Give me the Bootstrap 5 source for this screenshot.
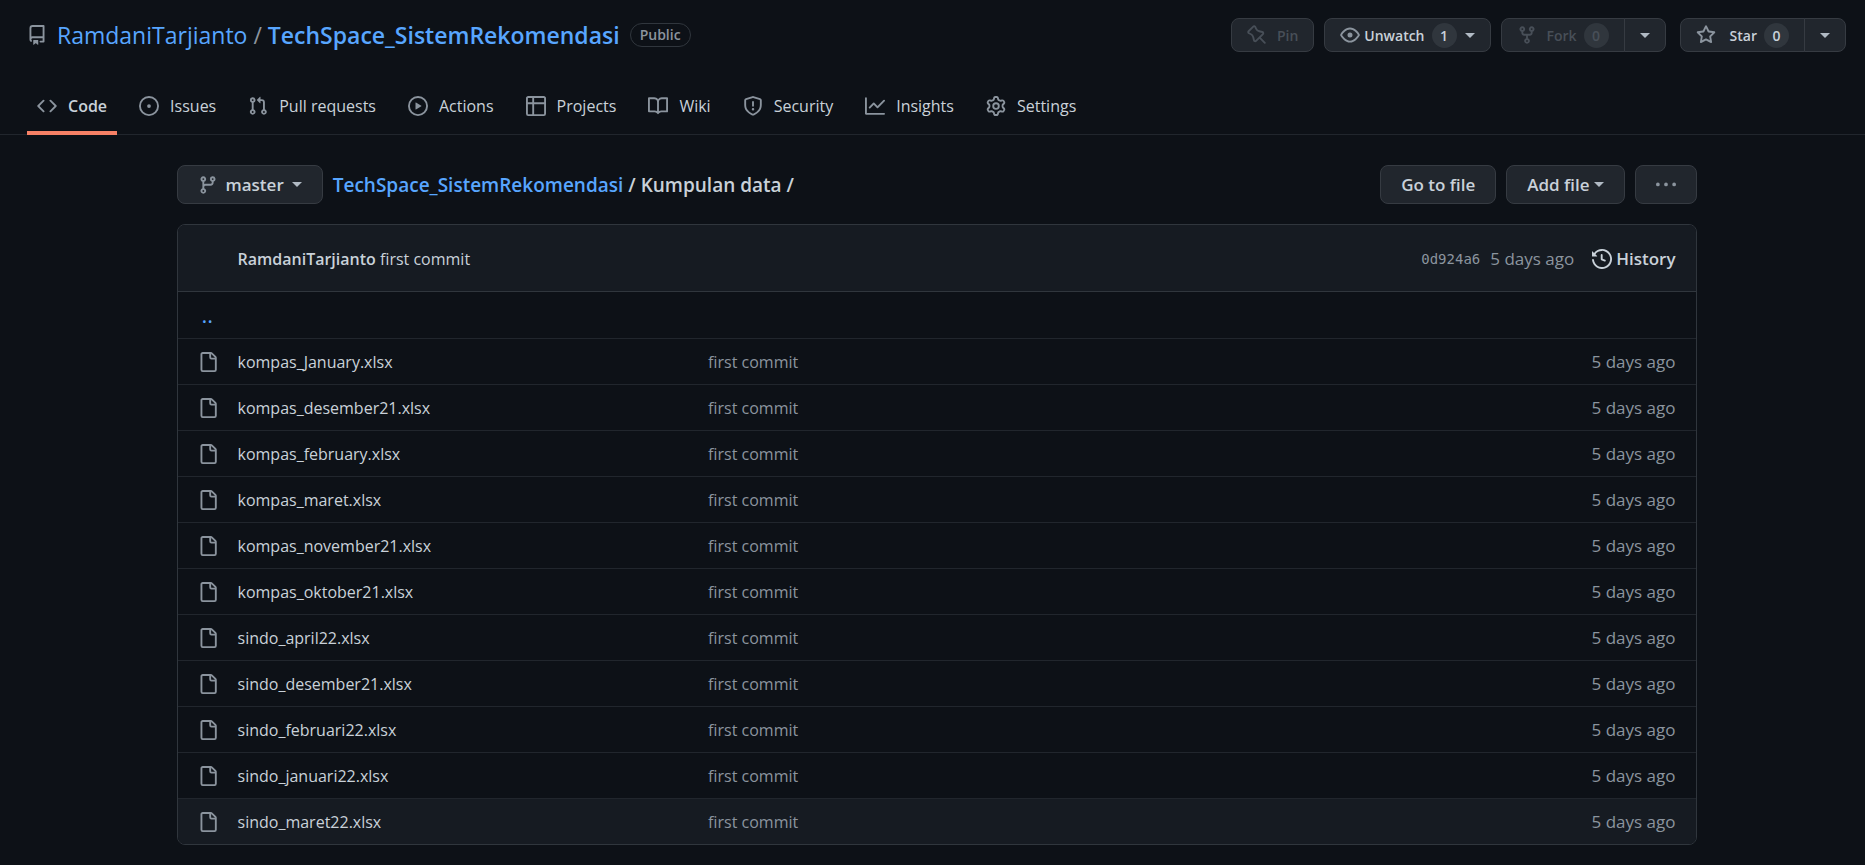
<!DOCTYPE html>
<html lang="en" data-bs-theme="dark">
<head>
<meta charset="utf-8">
<meta name="viewport" content="width=device-width, initial-scale=1">
<title>TechSpace_SistemRekomendasi/Kumpulan data</title>
<link href="https://cdn.jsdelivr.net/npm/bootstrap@5.3.0/dist/css/bootstrap.min.css" rel="stylesheet">
<style>
  :root {
    --canvas: #0d1117; --subtle: #161b22; --line: #30363d; --line-soft: #21262d;
    --fg: #c9d1d9; --dim: #8b949e; --accent: #58a6ff;
  }
  body { background: var(--canvas); color: var(--fg); font: 400 17px/26px "Open Sans", "Noto Sans", sans-serif; }
  a { color: inherit; text-decoration: none; }
  a:hover { text-decoration: underline; }
  .accent { color: var(--accent); }
  .dim { color: var(--dim); }
  .semi { font-weight: 600; }
  .body-text { font-size: 16px; }
  .spaced { gap: 10px; }
  .ico { width: 20px; height: 20px; fill: currentColor; flex: none; }
  .repo-head { padding: 17px 19px 0 27px; }
  .repo-title { font-size: 23px; line-height: 36px; font-weight: 400; }
  .visibility { border: 1px solid var(--line); border-radius: 12px; font-size: 14px; line-height: 22px; padding: 0 9px; color: var(--dim); font-weight: 600; }
  .gh-btn { --bs-btn-color: var(--fg); --bs-btn-bg: #21262d; --bs-btn-border-color: #363b42;
    --bs-btn-hover-color: var(--fg); --bs-btn-hover-bg: #30363d; --bs-btn-hover-border-color: #8b949e;
    --bs-btn-active-color: var(--fg); --bs-btn-active-bg: #282e33; --bs-btn-active-border-color: #6e7681;
    --bs-btn-disabled-color: #484f58; --bs-btn-disabled-bg: #21262d; --bs-btn-disabled-border-color: #363b42; --bs-btn-disabled-opacity: 1;
    --bs-btn-font-size: 17px; --bs-btn-font-weight: 600; --bs-btn-border-radius: 8px; --bs-btn-padding-x: 20px; --bs-btn-padding-y: 0;
    display: inline-flex; align-items: center; justify-content: center; height: 39px; }
  .gh-btn .ico { color: var(--dim); }
  .gh-btn:disabled .ico { color: #484f58; }
  .gh-btn.compact { --bs-btn-font-size: 14px; --bs-btn-padding-x: 15px; height: 34px; }
  .gh-btn.split { width: 42px; }
  .gh-btn.roomy .ico { margin-right: 10px; }
  .gh-btn.wide .ico { margin-right: 14px; }
  .tally { min-width: 25px; height: 25px; line-height: 25px; border-radius: 13px; background: #30363d; text-align: center; margin-left: 7px; }
  .tri { width: 0; height: 0; border: 5px solid transparent; border-top-color: #b1bac4; border-bottom: 0; }
  .tabs { padding: 0 27px; border-bottom: 1px solid var(--line-soft); margin-top: 22px; gap: 12px; }
  .tabs a { display: flex; align-items: center; gap: 11px; height: 60px; padding: 5px 10px 0; border-bottom: 4px solid transparent; margin-bottom: -1px; font-size: 16px; }
  .tabs a.active { border-color: #f78166; font-weight: 600; }
  .tabs .ico { color: var(--dim); }
  main { padding-left: 8px; }
  .page { max-width: 1520px; margin: 30px auto 20px; }
  .path { font-size: 19px; }
  .files { border: 1px solid var(--line); border-radius: 8px; overflow: hidden; margin-top: 20px; }
  .commit { background: var(--subtle); border-bottom: 1px solid var(--line); height: 67px; padding: 2px 20px 0 60px; }
  .hash { font: 14px/20px "DejaVu Sans Mono", monospace; }
  .listing { width: 100%; table-layout: fixed; }
  .listing td { height: 46px; padding: 1px 0 0; border-bottom: 1px solid var(--line-soft); }
  .listing tr:last-child td { background: var(--subtle); border-bottom: 0; }
  .c-icon { width: 60px; }
  .c-name { width: 31%; }
  .c-age { width: 20%; }
  .listing td:first-child { padding-left: 20px; }
  .listing td:last-child { padding-right: 20px; }
  .listing .ico { display: block; }
  .up { font-size: 22px; }
</style>
</head>
<body>
<svg class="d-none" xmlns="http://www.w3.org/2000/svg">
  <symbol id="repo" viewBox="0 0 16 16"><path fill-rule="evenodd" d="M2 2.5A2.5 2.5 0 014.5 0h8.75a.75.75 0 01.75.75v12.5a.75.75 0 01-.75.75h-2.5a.75.75 0 110-1.5h1.75v-2h-8a1 1 0 00-.714 1.7.75.75 0 01-1.072 1.05A2.495 2.495 0 012 11.5v-9zm10.5-1V9h-8c-.356 0-.694.074-1 .208V2.5a1 1 0 011-1h8zM5 12.25v3.25a.25.25 0 00.4.2l1.45-1.087a.25.25 0 01.3 0L8.6 15.7a.25.25 0 00.4-.2v-3.25a.25.25 0 00-.25-.25h-3.5a.25.25 0 00-.25.25z"/></symbol>
  <symbol id="code" viewBox="0 0 16 16"><path fill-rule="evenodd" d="M4.72 3.22a.75.75 0 011.06 1.06L2.06 8l3.72 3.72a.75.75 0 11-1.06 1.06L.47 8.53a.75.75 0 010-1.06l4.25-4.25zm6.56 0a.75.75 0 10-1.06 1.06L13.94 8l-3.72 3.72a.75.75 0 101.06 1.06l4.25-4.25a.75.75 0 000-1.06l-4.25-4.25z"/></symbol>
  <symbol id="issue" viewBox="0 0 16 16"><path d="M8 9.5a1.5 1.5 0 100-3 1.5 1.5 0 000 3z"/><path fill-rule="evenodd" d="M8 0a8 8 0 100 16A8 8 0 008 0zM1.5 8a6.5 6.5 0 1113 0 6.5 6.5 0 01-13 0z"/></symbol>
  <symbol id="pull" viewBox="0 0 16 16"><path fill-rule="evenodd" d="M7.177 3.073L9.573.677A.25.25 0 0110 .854v4.792a.25.25 0 01-.427.177L7.177 3.427a.25.25 0 010-.354zM3.75 2.5a.75.75 0 100 1.5.75.75 0 000-1.5zm-2.25.75a2.25 2.25 0 113 2.122v5.256a2.251 2.251 0 11-1.5 0V5.372A2.25 2.25 0 011.5 3.25zM11 2.5h-1V4h1a1 1 0 011 1v5.628a2.251 2.251 0 101.5 0V5A2.5 2.5 0 0011 2.5zm1 10.25a.75.75 0 111.5 0 .75.75 0 01-1.5 0zM3.75 12a.75.75 0 100 1.5.75.75 0 000-1.5z"/></symbol>
  <symbol id="play" viewBox="0 0 16 16"><path fill-rule="evenodd" d="M1.5 8a6.5 6.5 0 1113 0 6.5 6.5 0 01-13 0zM8 0a8 8 0 100 16A8 8 0 008 0zM6.379 5.227A.25.25 0 006 5.442v5.117a.25.25 0 00.379.214l4.264-2.559a.25.25 0 000-.428L6.379 5.227z"/></symbol>
  <symbol id="board" viewBox="0 0 16 16"><path fill-rule="evenodd" d="M0 1.75C0 .784.784 0 1.75 0h12.5C15.216 0 16 .784 16 1.75v12.5A1.75 1.75 0 0114.25 16H1.75A1.75 1.75 0 010 14.25V1.75zM1.5 6.5v7.75c0 .138.112.25.25.25H5v-8H1.5zM5 5H1.5V1.75a.25.25 0 01.25-.25H5V5zm1.5 1.5v8h7.75a.25.25 0 00.25-.25V6.5h-8zm8-1.5h-8V1.5h7.75a.25.25 0 01.25.25V5z"/></symbol>
  <symbol id="book" viewBox="0 0 16 16"><path fill-rule="evenodd" d="M0 1.75A.75.75 0 01.75 1h4.253c1.227 0 2.317.59 3 1.501A3.744 3.744 0 0111.006 1h4.245a.75.75 0 01.75.75v10.5a.75.75 0 01-.75.75h-4.507a2.25 2.25 0 00-1.591.659l-.622.621a.75.75 0 01-1.06 0l-.622-.621A2.25 2.25 0 005.258 13H.75a.75.75 0 01-.75-.75V1.75zm8.755 3a2.25 2.25 0 012.25-2.25H14.5v9h-3.757c-.71 0-1.4.201-1.992.572l.004-7.322zm-1.504 7.324l.004-5.073-.002-2.253A2.25 2.25 0 005.003 2.5H1.5v9h3.757a3.75 3.75 0 011.994.574z"/></symbol>
  <symbol id="shield" viewBox="0 0 16 16"><path fill-rule="evenodd" d="M7.467.133a1.75 1.75 0 011.066 0l5.25 1.68A1.75 1.75 0 0115 3.48V7c0 1.566-.32 3.182-1.303 4.682-.983 1.498-2.585 2.813-5.032 3.855a1.7 1.7 0 01-1.33 0c-2.447-1.042-4.049-2.357-5.032-3.855C1.32 10.182 1 8.566 1 7V3.48a1.75 1.75 0 011.217-1.667l5.25-1.68zm.61 1.429a.25.25 0 00-.153 0l-5.25 1.68a.25.25 0 00-.174.238V7c0 1.358.275 2.666 1.057 3.86.784 1.194 2.121 2.34 4.366 3.297a.2.2 0 00.154 0c2.245-.956 3.582-2.104 4.366-3.298C13.225 9.666 13.5 8.36 13.5 7V3.48a.25.25 0 00-.174-.237l-5.25-1.68zM9 10.5a1 1 0 11-2 0 1 1 0 012 0zm-.25-5.75a.75.75 0 10-1.5 0v3a.75.75 0 001.5 0v-3z"/></symbol>
  <symbol id="graph" viewBox="0 0 16 16"><path fill-rule="evenodd" d="M1.5 1.75a.75.75 0 00-1.5 0v12.5c0 .414.336.75.75.75h14.5a.75.75 0 000-1.5H1.5V1.75zm14.28 2.53a.75.75 0 00-1.06-1.06L10 7.94 7.53 5.47a.75.75 0 00-1.06 0L3.22 8.72a.75.75 0 001.06 1.06L7 7.06l2.47 2.47a.75.75 0 001.06 0l5.25-5.25z"/></symbol>
  <symbol id="gear" viewBox="0 0 16 16"><path fill-rule="evenodd" d="M7.429 1.525a6.593 6.593 0 011.142 0c.036.003.108.036.137.146l.289 1.105c.147.56.55.967.997 1.189.174.086.341.183.501.29.417.278.97.423 1.53.27l1.102-.303c.11-.03.175.016.195.046.219.31.41.641.573.989.014.031.022.11-.059.19l-.815.806c-.411.406-.562.957-.53 1.456a4.588 4.588 0 010 .582c-.032.499.119 1.05.53 1.456l.815.806c.08.08.073.159.059.19a6.494 6.494 0 01-.573.99c-.02.029-.086.074-.195.045l-1.103-.303c-.559-.153-1.112-.008-1.529.27-.16.107-.327.204-.5.29-.449.222-.851.628-.998 1.189l-.289 1.105c-.029.11-.101.143-.137.146a6.613 6.613 0 01-1.142 0c-.036-.003-.108-.037-.137-.146l-.289-1.105c-.147-.56-.55-.967-.997-1.189a4.502 4.502 0 01-.501-.29c-.417-.278-.97-.423-1.53-.27l-1.102.303c-.11.03-.175-.016-.195-.046a6.492 6.492 0 01-.573-.989c-.014-.031-.022-.11.059-.19l.815-.806c.411-.406.562-.957.53-1.456a4.587 4.587 0 010-.582c.032-.499-.119-1.05-.53-1.456l-.815-.806c-.08-.08-.073-.159-.059-.19a6.44 6.44 0 01.573-.99c.02-.029.086-.075.195-.045l1.103.303c.559.153 1.112.008 1.529-.27.16-.107.327-.204.5-.29.449-.222.851-.628.998-1.189l.289-1.105c.029-.11.101-.143.137-.146zM8 0c-.236 0-.47.01-.701.03-.743.065-1.29.615-1.458 1.261l-.29 1.106c-.017.066-.078.158-.211.224a5.994 5.994 0 00-.668.386c-.123.082-.233.09-.3.071L3.27 2.776c-.644-.177-1.392.02-1.82.63a7.977 7.977 0 00-.704 1.217c-.315.675-.111 1.422.363 1.891l.815.806c.05.048.098.147.088.294a6.084 6.084 0 000 .772c.01.147-.038.246-.088.294l-.815.806c-.474.469-.678 1.216-.363 1.891.2.428.436.835.704 1.218.428.609 1.176.806 1.82.63l1.103-.303c.066-.019.176-.011.299.071.213.143.436.272.668.386.133.066.194.158.212.224l.289 1.106c.169.646.715 1.196 1.458 1.26a8.094 8.094 0 001.402 0c.743-.064 1.29-.614 1.458-1.26l.29-1.106c.017-.066.078-.158.211-.224a5.98 5.98 0 00.668-.386c.123-.082.233-.09.3-.071l1.102.302c.644.177 1.392-.02 1.82-.63.268-.382.505-.789.704-1.217.315-.675.111-1.422-.364-1.891l-.814-.806c-.05-.048-.098-.147-.088-.294a6.1 6.1 0 000-.772c-.01-.147.039-.246.088-.294l.814-.806c.475-.469.679-1.216.364-1.891a7.992 7.992 0 00-.704-1.218c-.428-.609-1.176-.806-1.82-.63l-1.103.303c-.066.019-.176.011-.299-.071a5.991 5.991 0 00-.668-.386c-.133-.066-.194-.158-.212-.224L10.16 1.29C9.99.645 9.444.095 8.701.031A8.094 8.094 0 008 0zm1.5 8a1.5 1.5 0 11-3 0 1.5 1.5 0 013 0zM11 8a3 3 0 11-6 0 3 3 0 016 0z"/></symbol>
  <symbol id="eye" viewBox="0 0 16 16"><path fill-rule="evenodd" d="M1.679 7.932c.412-.621 1.242-1.75 2.366-2.717C5.175 4.242 6.527 3.5 8 3.5c1.473 0 2.824.742 3.955 1.715 1.124.967 1.954 2.096 2.366 2.717a.119.119 0 010 .136c-.412.621-1.242 1.75-2.366 2.717C10.825 11.758 9.473 12.5 8 12.5c-1.473 0-2.824-.742-3.955-1.715C2.92 9.818 2.09 8.69 1.679 8.068a.119.119 0 010-.136zM8 2c-1.981 0-3.67.992-4.933 2.078C1.797 5.169.88 6.423.43 7.1a1.619 1.619 0 000 1.798c.45.678 1.367 1.932 2.637 3.024C4.329 13.008 6.019 14 8 14c1.981 0 3.67-.992 4.933-2.078 1.27-1.091 2.187-2.345 2.637-3.023a1.619 1.619 0 000-1.798c-.45-.678-1.367-1.932-2.637-3.023C11.671 2.992 9.981 2 8 2zm0 8a2 2 0 100-4 2 2 0 000 4z"/></symbol>
  <symbol id="fork" viewBox="0 0 16 16"><path fill-rule="evenodd" d="M5 3.25a.75.75 0 11-1.5 0 .75.75 0 011.5 0zm0 2.122a2.25 2.25 0 10-1.5 0v.878A2.25 2.25 0 005.75 8.5h1.5v2.128a2.251 2.251 0 101.5 0V8.5h1.5a2.25 2.25 0 002.25-2.25v-.878a2.25 2.25 0 10-1.5 0v.878a.75.75 0 01-.75.75h-4.5A.75.75 0 015 6.25v-.878zm3.75 7.378a.75.75 0 11-1.5 0 .75.75 0 011.5 0zm3-8.75a.75.75 0 100-1.5.75.75 0 000 1.5z"/></symbol>
  <symbol id="star" viewBox="0 0 16 16"><path fill-rule="evenodd" d="M8 .25a.75.75 0 01.673.418l1.882 3.815 4.21.612a.75.75 0 01.416 1.279l-3.046 2.97.719 4.192a.75.75 0 01-1.088.791L8 12.347l-3.766 1.98a.75.75 0 01-1.088-.79l.72-4.194L.818 6.374a.75.75 0 01.416-1.28l4.21-.611L7.327.668A.75.75 0 018 .25zm0 2.445L6.615 5.5a.75.75 0 01-.564.41l-3.097.45 2.24 2.184a.75.75 0 01.216.664l-.528 3.084 2.769-1.456a.75.75 0 01.698 0l2.77 1.456-.53-3.084a.75.75 0 01.216-.664l2.24-2.183-3.096-.45a.75.75 0 01-.564-.41L8 2.694v.001z"/></symbol>
  <symbol id="pin" viewBox="0 0 16 16"><path fill-rule="evenodd" d="M4.456.734a1.75 1.75 0 012.826.504l.613 1.327a3.081 3.081 0 002.084 1.707l2.454.584c1.332.317 1.8 1.972.832 2.94L11.06 10l3.72 3.72a.75.75 0 11-1.061 1.06L10 11.06l-2.204 2.205c-.968.968-2.623.5-2.94-.832l-.584-2.454a3.081 3.081 0 00-1.707-2.084l-1.327-.613a1.75 1.75 0 01-.504-2.826L4.456.734zM5.92 1.866a.25.25 0 00-.404-.072L1.794 5.516a.25.25 0 00.072.404l1.328.613A4.582 4.582 0 015.73 9.63l.584 2.454a.25.25 0 00.42.12l5.47-5.47a.25.25 0 00-.12-.42L9.63 5.73a4.581 4.581 0 01-3.098-2.537L5.92 1.866z"/></symbol>
  <symbol id="branch" viewBox="0 0 16 16"><path fill-rule="evenodd" d="M11.75 2.5a.75.75 0 100 1.5.75.75 0 000-1.5zm-2.25.75a2.25 2.25 0 113 2.122V6A2.5 2.5 0 0110 8.5H6a1 1 0 00-1 1v1.128a2.251 2.251 0 11-1.5 0V5.372a2.25 2.25 0 111.5 0v1.836A2.492 2.492 0 016 7h4a1 1 0 001-1v-.628A2.25 2.25 0 019.5 3.25zM4.25 12a.75.75 0 100 1.5.75.75 0 000-1.5zM3.5 3.25a.75.75 0 111.5 0 .75.75 0 01-1.5 0z"/></symbol>
  <symbol id="dots" viewBox="0 0 16 16"><path d="M8 9a1.5 1.5 0 100-3 1.5 1.5 0 000 3zM1.5 9a1.5 1.5 0 100-3 1.5 1.5 0 000 3zm13 0a1.5 1.5 0 100-3 1.5 1.5 0 000 3z"/></symbol>
  <symbol id="clock" viewBox="0 0 16 16"><path fill-rule="evenodd" d="M1.643 3.143L.427 1.927A.25.25 0 000 2.104V5.75c0 .138.112.25.25.25h3.646a.25.25 0 00.177-.427L2.715 4.215a6.5 6.5 0 11-1.18 4.458.75.75 0 10-1.493.154 8.001 8.001 0 101.6-5.684zM7.75 4a.75.75 0 01.75.75v2.992l2.028.812a.75.75 0 01-.557 1.392l-2.5-1A.75.75 0 017 8.25v-3.5A.75.75 0 017.75 4z"/></symbol>
  <symbol id="file" viewBox="0 0 16 16"><path fill-rule="evenodd" d="M2 1.75C2 .784 2.784 0 3.75 0h6.586c.464 0 .909.184 1.237.513l2.914 2.914c.329.328.513.773.513 1.237v9.586A1.75 1.75 0 0113.25 16h-9.5A1.75 1.75 0 012 14.25V1.75zm1.75-.25a.25.25 0 00-.25.25v12.5c0 .138.112.25.25.25h9.5a.25.25 0 00.25-.25V6h-2.75A1.75 1.75 0 019 4.25V1.5H3.75zm6.75.062V4.25c0 .138.112.25.25.25h2.688a.252.252 0 00-.011-.013l-2.914-2.914a.272.272 0 00-.013-.011z"/></symbol>
</svg>

<header>
  <div class="repo-head d-flex flex-wrap justify-content-between">
    <div class="d-flex align-items-center spaced">
      <svg class="ico dim"><use href="#repo"/></svg>
      <h1 class="repo-title mb-0 accent"><a href="#">RamdaniTarjianto</a> <span class="dim">/</span> <a href="#" class="semi">TechSpace_SistemRekomendasi</a></h1>
      <span class="visibility">Public</span>
    </div>
    <div class="d-flex align-items-center spaced">
      <button class="btn gh-btn compact roomy" disabled><svg class="ico"><use href="#pin"/></svg>Pin</button>
      <button class="btn gh-btn compact"><svg class="ico me-1"><use href="#eye"/></svg>Unwatch<span class="tally">1</span><span class="tri ms-2"></span></button>
      <div class="btn-group">
        <button class="btn gh-btn compact roomy" disabled><svg class="ico"><use href="#fork"/></svg>Fork<span class="tally">0</span></button>
        <button class="btn gh-btn compact split" aria-label="See your forks"><span class="tri"></span></button>
      </div>
      <div class="btn-group ms-1">
        <button class="btn gh-btn compact wide"><svg class="ico"><use href="#star"/></svg>Star<span class="tally">0</span></button>
        <button class="btn gh-btn compact split" aria-label="Add to a list"><span class="tri"></span></button>
      </div>
    </div>
  </div>
  <nav class="tabs d-flex" aria-label="Repository">
    <a href="#" class="active"><svg class="ico"><use href="#code"/></svg>Code</a>
    <a href="#"><svg class="ico"><use href="#issue"/></svg>Issues</a>
    <a href="#"><svg class="ico"><use href="#pull"/></svg>Pull requests</a>
    <a href="#"><svg class="ico"><use href="#play"/></svg>Actions</a>
    <a href="#"><svg class="ico"><use href="#board"/></svg>Projects</a>
    <a href="#"><svg class="ico"><use href="#book"/></svg>Wiki</a>
    <a href="#"><svg class="ico"><use href="#shield"/></svg>Security</a>
    <a href="#"><svg class="ico"><use href="#graph"/></svg>Insights</a>
    <a href="#"><svg class="ico"><use href="#gear"/></svg>Settings</a>
  </nav>
</header>

<main>
<div class="page">
  <div class="d-flex align-items-center spaced">
    <button class="btn gh-btn"><svg class="ico me-2"><use href="#branch"/></svg>master<span class="tri ms-2"></span></button>
    <div class="path semi"><a href="#" class="accent">TechSpace_SistemRekomendasi</a> / Kumpulan data /</div>
    <div class="d-flex ms-auto spaced">
      <a href="#" class="btn gh-btn">Go to file</a>
      <button class="btn gh-btn">Add file<span class="tri ms-1"></span></button>
      <button class="btn gh-btn" aria-label="More options"><svg class="ico"><use href="#dots"/></svg></button>
    </div>
  </div>

  <section class="files">
    <div class="commit d-flex align-items-center spaced">
      <div class="body-text"><a href="#" class="semi">RamdaniTarjianto</a> <a href="#">first commit</a></div>
      <a href="#" class="hash dim ms-auto">0d924a6</a>
      <span class="dim">5 days ago</span>
      <a href="#" class="semi d-flex align-items-center gap-1 ms-2"><svg class="ico"><use href="#clock"/></svg>History</a>
    </div>
    <table class="listing">
      <colgroup><col class="c-icon"><col class="c-name"><col><col class="c-age"></colgroup>
      <tbody>
        <tr><td colspan="4"><a href="#" class="accent up px-1" aria-label="Parent directory">..</a></td></tr>
        <tr><td><svg class="ico dim"><use href="#file"/></svg></td><td class="body-text"><a href="#">kompas_January.xlsx</a></td><td class="body-text dim">first commit</td><td class="dim text-end">5 days ago</td></tr>
        <tr><td><svg class="ico dim"><use href="#file"/></svg></td><td class="body-text"><a href="#">kompas_desember21.xlsx</a></td><td class="body-text dim">first commit</td><td class="dim text-end">5 days ago</td></tr>
        <tr><td><svg class="ico dim"><use href="#file"/></svg></td><td class="body-text"><a href="#">kompas_february.xlsx</a></td><td class="body-text dim">first commit</td><td class="dim text-end">5 days ago</td></tr>
        <tr><td><svg class="ico dim"><use href="#file"/></svg></td><td class="body-text"><a href="#">kompas_maret.xlsx</a></td><td class="body-text dim">first commit</td><td class="dim text-end">5 days ago</td></tr>
        <tr><td><svg class="ico dim"><use href="#file"/></svg></td><td class="body-text"><a href="#">kompas_november21.xlsx</a></td><td class="body-text dim">first commit</td><td class="dim text-end">5 days ago</td></tr>
        <tr><td><svg class="ico dim"><use href="#file"/></svg></td><td class="body-text"><a href="#">kompas_oktober21.xlsx</a></td><td class="body-text dim">first commit</td><td class="dim text-end">5 days ago</td></tr>
        <tr><td><svg class="ico dim"><use href="#file"/></svg></td><td class="body-text"><a href="#">sindo_april22.xlsx</a></td><td class="body-text dim">first commit</td><td class="dim text-end">5 days ago</td></tr>
        <tr><td><svg class="ico dim"><use href="#file"/></svg></td><td class="body-text"><a href="#">sindo_desember21.xlsx</a></td><td class="body-text dim">first commit</td><td class="dim text-end">5 days ago</td></tr>
        <tr><td><svg class="ico dim"><use href="#file"/></svg></td><td class="body-text"><a href="#">sindo_februari22.xlsx</a></td><td class="body-text dim">first commit</td><td class="dim text-end">5 days ago</td></tr>
        <tr><td><svg class="ico dim"><use href="#file"/></svg></td><td class="body-text"><a href="#">sindo_januari22.xlsx</a></td><td class="body-text dim">first commit</td><td class="dim text-end">5 days ago</td></tr>
        <tr><td><svg class="ico dim"><use href="#file"/></svg></td><td class="body-text"><a href="#">sindo_maret22.xlsx</a></td><td class="body-text dim">first commit</td><td class="dim text-end">5 days ago</td></tr>
      </tbody>
    </table>
  </section>
</div>
</main>
<script src="https://cdn.jsdelivr.net/npm/bootstrap@5.3.0/dist/js/bootstrap.bundle.min.js"></script>
</body>
</html>
